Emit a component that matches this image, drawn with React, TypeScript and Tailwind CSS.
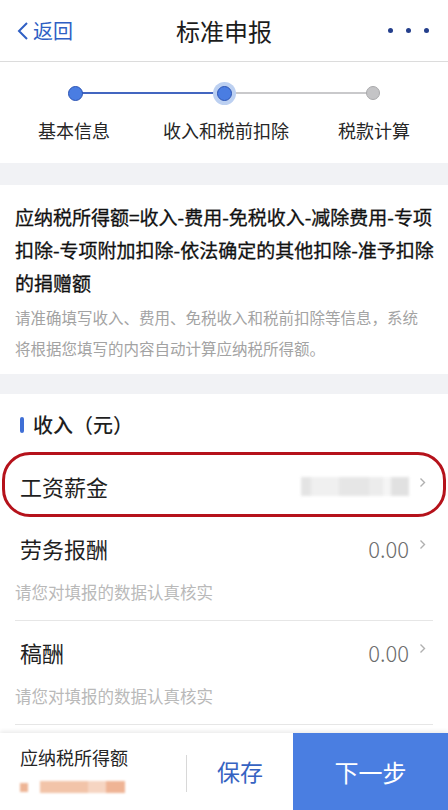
import React from 'react';

const Chevron = () => (
  <svg width="7" height="11" viewBox="0 0 7 11" className="ml-[10px] -mt-[8px]">
    <path d="M1.5 1.5 L5.5 5.5 L1.5 9.5" fill="none" stroke="#b0b0b0" strokeWidth="1.4" />
  </svg>
);

const Step = ({ state }: { state: 'done' | 'active' | 'todo' }) => (
  <div className="h-[24px] flex items-center justify-center">
    {state === 'todo' ? (
      <div className="w-[14px] h-[14px] rounded-full bg-[#c4c4c6] border border-[#a9a9ab]" />
    ) : (
      <div
        className={`w-[15px] h-[15px] rounded-full bg-[#4a7de2] border-[1.5px] border-[#2c54b4] ${
          state === 'active' ? 'ring-[4px] ring-[#bcd0f1]' : ''
        }`}
      />
    )}
  </div>
);

interface IncomeRowProps {
  label: string;
  value?: string;
  hint?: boolean;
  circled?: boolean;
}

const IncomeRow: React.FC<IncomeRowProps> = ({ label, value, hint, circled }) => (
  <div className={hint ? 'mx-[15px] border-b border-[#e6e6e6]' : 'mx-[15px]'}>
    <div className="relative h-[62px] flex items-center justify-between">
      {circled && (
        <div className="absolute -left-[13px] -right-[13px] -top-[3px] bottom-[0px] rounded-[28px] border-[3px] border-[#b5121b]" />
      )}
      <span className="text-[22px] text-[#1f1f1f] pl-[5px]">{label}</span>
      <div className="flex items-center pr-[7px]">
        {value ? (
          <span className="text-[22px] text-[#6b6b6b] font-light">{value}</span>
        ) : (
          <div className="flex items-center blur-[1.5px] opacity-75">
            <div className="w-[10px] h-[19px] bg-[#dcdcdc]" />
            <div className="w-[28px] h-[19px] bg-[#ebebeb]" />
            <div className="w-[30px] h-[19px] bg-[#dedede]" />
            <div className="w-[14px] h-[19px] bg-[#e6e6e6]" />
            <div className="w-[8px] h-[19px] bg-[#f2f2f2]" />
            <div className="w-[18px] h-[19px] bg-[#d8d8d8]" />
          </div>
        )}
        <Chevron />
      </div>
    </div>
    {hint && (
      <div className="text-[16.5px] leading-[24px] text-[#b9b9b9] pb-[16px] mt-[1px]">请您对填报的数据认真核实</div>
    )}
  </div>
);

export default function App() {
  return (
    <div className="w-[448px] h-[810px] flex flex-col overflow-hidden bg-white font-['Noto_Sans_CJK_SC','Noto_Sans',sans-serif]">
      <div className="flex-1 overflow-hidden">
        {/* header */}
        <div className="h-[62px] flex items-center justify-between border-b-[1.5px] border-[#dcdcdc] px-[17px]">
          <div className="flex items-center w-[90px] text-[#2f5fc4]">
            <svg width="12" height="20" viewBox="0 0 12 20">
              <path d="M10 2 L2 10 L10 18" fill="none" stroke="#2f5fc4" strokeWidth="2" />
            </svg>
            <span className="text-[20px] ml-[4px]">返回</span>
          </div>
          <span className="text-[24px] text-[#1c1c1c]">标准申报</span>
          <div className="flex items-center justify-end w-[90px] gap-[13px] pr-[2px]">
            <div className="w-[5px] h-[5px] rounded-full bg-[#243f8c]" />
            <div className="w-[5px] h-[5px] rounded-full bg-[#243f8c]" />
            <div className="w-[5px] h-[5px] rounded-full bg-[#243f8c]" />
          </div>
        </div>

        {/* steps */}
        <div className="h-[101px] pt-[19px]">
          <div className="relative mx-[75px] h-[24px] flex items-center justify-between">
            <div className="absolute left-0 w-1/2 h-[2px] bg-[#4366c0]" />
            <div className="absolute right-0 w-1/2 h-[2px] bg-[#c9c9cb]" />
            <div className="relative -ml-[7px]">
              <Step state="done" />
            </div>
            <div className="relative">
              <Step state="active" />
            </div>
            <div className="relative -mr-[7px]">
              <Step state="todo" />
            </div>
          </div>
          <div className="flex justify-between text-[18px] text-[#262626] mt-[12px] px-[38px]">
            <span>基本信息</span>
            <span className="ml-[4px]">收入和税前扣除</span>
            <span>税款计算</span>
          </div>
        </div>

        <div className="h-[22px] bg-[#f1f2f5]" />

        {/* formula */}
        <div className="px-[15px] pt-[15px] pb-[10px]">
          <div className="text-[19px] leading-[33px] text-[#111111] whitespace-nowrap [-webkit-text-stroke:0.3px_#111111]">
            应纳税所得额=收入-费用-免税收入-减除费用-专项
            <br />
            扣除-专项附加扣除-依法确定的其他扣除-准予扣除
            <br />
            的捐赠额
          </div>
          <div className="mt-[3px] text-[15.5px] leading-[31px] text-[#a3a3a3] whitespace-nowrap">
            请准确填写收入、费用、免税收入和税前扣除等信息，系统
            <br />
            将根据您填写的内容自动计算应纳税所得额。
          </div>
        </div>

        <div className="h-[20px] bg-[#f1f2f5]" />

        {/* income */}
        <div className="h-[61px] flex items-center px-[20px]">
          <div className="w-[4px] h-[16px] rounded-full bg-[#3f6fd6] mr-[9px]" />
          <span className="text-[20px] text-[#1f1f1f] font-medium">收入（元）</span>
        </div>
        <IncomeRow label="工资薪金" circled />
        <IncomeRow label="劳务报酬" value="0.00" hint />
        <IncomeRow label="稿酬" value="0.00" hint />
      </div>

      {/* bottom bar */}
      <div className="h-[77px] flex shrink-0 shadow-[0_-2px_4px_rgba(0,0,0,0.08)] bg-white">
        <div className="w-[186px] pl-[20px] pt-[13px]">
          <div className="text-[18px] leading-[22px] text-[#262626]">应纳税所得额</div>
          <div className="flex items-center mt-[13px] blur-[1px]">
            <div className="w-[8px] h-[9px] bg-[#eeb596]" />
            <div className="w-[48px] h-[12px] bg-[#f2c4a9] ml-[12px]" />
            <div className="w-[18px] h-[12px] bg-[#f6d5c2]" />
            <div className="w-[19px] h-[12px] bg-[#efb495]" />
          </div>
        </div>
        <div className="w-[1px] h-[37px] bg-[#d8d8d8] mt-[22px]" />
        <div className="w-[106px] flex items-center justify-center text-[23px] text-[#3663c2]">保存</div>
        <div className="flex-1 bg-[#4a7ee1] flex items-center justify-center text-[24px] text-white">下一步</div>
      </div>
    </div>
  );
}
